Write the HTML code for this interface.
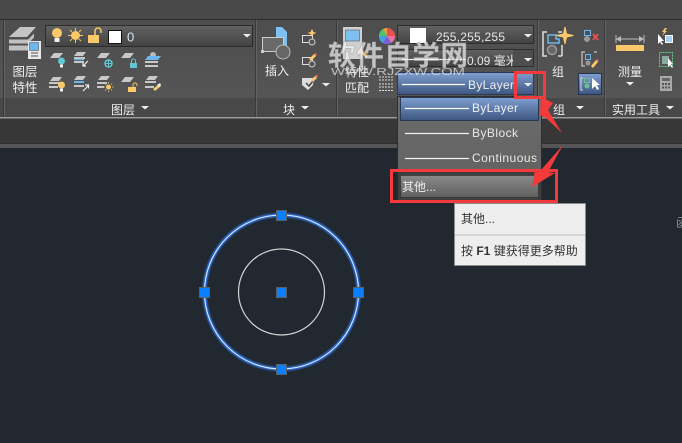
<!DOCTYPE html>
<html><head><meta charset="utf-8">
<style>
html,body{margin:0;padding:0;background:#212830;width:682px;height:443px;overflow:hidden}
svg{display:block}
text{font-family:"Liberation Sans","Noto Sans CJK SC",sans-serif}
</style></head>
<body>
<svg width="682" height="443" viewBox="0 0 682 443" xmlns="http://www.w3.org/2000/svg">
<defs>
<linearGradient id="bl" x1="0" y1="0" x2="0" y2="1"><stop offset="0" stop-color="#7f9fd0"/><stop offset="1" stop-color="#3d5680"/></linearGradient>
<linearGradient id="dd" x1="0" y1="0" x2="0" y2="1"><stop offset="0" stop-color="#626262"/><stop offset="1" stop-color="#434343"/></linearGradient>
<linearGradient id="btn" x1="0" y1="0" x2="0" y2="1"><stop offset="0" stop-color="#8a8a8a"/><stop offset="1" stop-color="#5f5f5f"/></linearGradient>
<linearGradient id="rib" x1="0" y1="0" x2="0" y2="1"><stop offset="0" stop-color="#4d4d4d"/><stop offset="1" stop-color="#555"/></linearGradient>
<linearGradient id="menu" x1="0" y1="0" x2="0" y2="1"><stop offset="0" stop-color="#6c6c6c"/><stop offset="1" stop-color="#606060"/></linearGradient>
<filter id="gl" x="-10%" y="-10%" width="120%" height="120%"><feGaussianBlur stdDeviation="0.7"/></filter>
<g id="tri"><path d="M-4 0h8l-4 3.500z" fill="#eee"/></g>
</defs>

<!-- chrome -->
<rect width="682" height="19" fill="#494949"/>
<rect y="19" width="682" height="79" fill="url(#rib)"/>
<rect y="19" width="682" height="1" fill="#2e2e2e"/>
<rect y="98" width="682" height="19" fill="#484848"/>
<rect y="117" width="682" height="1.500" fill="#9a9a9a"/>
<rect y="118.500" width="682" height="25" fill="#373737"/>
<rect y="144" width="682" height="4" fill="#555"/>
<rect y="148" width="682" height="295" fill="#212830"/>
<g fill="#3a3a3a"><rect x="3" y="20" width="1" height="97"/><rect x="255" y="20" width="1" height="97"/><rect x="336" y="20" width="1" height="97"/><rect x="537" y="20" width="1" height="97"/><rect x="604" y="20" width="1" height="97"/></g>
<g fill="#626262"><rect x="4" y="20" width="1" height="97"/><rect x="256" y="20" width="1" height="97"/><rect x="337" y="20" width="1" height="97"/><rect x="538" y="20" width="1" height="97"/><rect x="605" y="20" width="1" height="97"/></g>

<!-- layer big icon -->
<path d="M9 37L20 27h16L27 37z" fill="#c4c4c4"/><path d="M9 39.500h19l6-6v4l-6 6H9z" fill="#c0c0c0"/><path d="M9 45.500h19v5H9z" fill="#c0c0c0"/>
<rect x="28" y="41" width="13" height="18" fill="#e8e8e8"/><rect x="29.500" y="42.500" width="9" height="8" fill="#6cb8ee" stroke="#444" stroke-width=".5"/>
<path d="M31 53h7M31 56h7" stroke="#555" stroke-width="1"/>
<text x="25" y="76" font-size="12.500" fill="#eee" text-anchor="middle">图层</text>
<text x="25" y="92" font-size="12.500" fill="#eee" text-anchor="middle">特性</text>

<!-- layer dropdown -->
<rect x="45.500" y="25.500" width="207" height="21" fill="url(#dd)" stroke="#2c2c2c"/>
<circle cx="57" cy="33" r="5" fill="#fbc96a"/><rect x="54.500" y="38" width="5" height="4" fill="#eee"/>
<circle cx="75.500" cy="35.500" r="4.500" fill="#fbc96a"/><path d="M75.500 28v3M75.500 40v3M68 35.500h3M80 35.500h3M70 30l2 2M79 39l2 2M81 30l-2 2M72 39l-2 2" stroke="#fbc96a" stroke-width="1"/>
<rect x="88" y="35" width="11" height="8" fill="#fbc96a"/><path d="M95 35v-4a3 3 0 0 1 6 0v2" fill="none" stroke="#fbc96a" stroke-width="1.500"/>
<rect x="108.500" y="30.500" width="13" height="13" fill="#fff" stroke="#111" stroke-width="1"/>
<text x="127" y="41.500" font-size="13" fill="#dbe8f2">0</text>
<use href="#tri" x="247" y="34"/>

<!-- layer small icons -->
<g>
<path d="M54 53h9l-4 5h-9z" fill="#c8c8c8"/><circle cx="61.500" cy="61" r="3.500" fill="#5fc8d4"/><rect x="60" y="64.500" width="3" height="3" fill="#eee"/>
<path d="M77 52h9l-3 4h-9zM74 57h11v2H74zM74 61h10v2H74z" fill="#c8c8c8"/><path d="M74 59.500h10" stroke="#6cb8ee" stroke-width="1.500"/><path d="M88 61l-5 5M83 63v3h3" stroke="#eee" stroke-width="1.200" fill="none"/>
<path d="M101 53h9l-4 5h-9z" fill="#c8c8c8"/><circle cx="108.500" cy="63.500" r="3.500" fill="none" stroke="#5fc8d4" stroke-width="1.500"/><path d="M105 63.500h7M108.500 60v7" stroke="#5fc8d4"/>
<path d="M125 53h9l-4 5h-9z" fill="#c8c8c8"/><rect x="130" y="63" width="7" height="5" fill="#5fc8d4"/><path d="M131.500 63v-2a2 2 0 0 1 4 0v2" fill="none" stroke="#5fc8d4"/>
<circle cx="153" cy="55" r="3" fill="#b8b8b8"/><path d="M148 56h13l-3 4h-13z" fill="#6cb8ee"/><path d="M145 61h13v2h-13zM145 65h13v2h-13z" fill="#c8c8c8"/>
<path d="M53 77h9l-3 4h-9zM49 82h11v2H49zM49 86h9v2H49z" fill="#c8c8c8"/><circle cx="61.500" cy="85" r="3.500" fill="#fbc96a"/><rect x="60" y="88.500" width="3" height="3" fill="#eee"/>
<path d="M77 76h9l-3 4h-9zM74 85h10v2H74z" fill="#c8c8c8"/><path d="M74 82h10" stroke="#6cb8ee" stroke-width="2"/><path d="M83 91l5-5M85 85h3.500v3.500" stroke="#eee" stroke-width="1.200" fill="none"/>
<path d="M101 76h9l-3 4h-9zM97 82h10v2H97zM97 86h7v2h-7z" fill="#c8c8c8"/><circle cx="108.500" cy="87" r="2.500" fill="#fbc96a"/><path d="M108.500 82v1.500M108.500 90.500v1.500M103.500 87h1.500M112 87h1.500M105 83.500l1 1M111 89.500l1 1M112 83.500l-1 1M105 90.500l1-1" stroke="#fbc96a" stroke-width=".8"/>
<path d="M125 77h9l-4 5h-9z" fill="#c8c8c8"/><rect x="128" y="87" width="8" height="5" fill="#fbc96a"/><path d="M133 87v-2a2 2 0 0 1 4 0v1" fill="none" stroke="#fbc96a"/>
<path d="M149 76h9l-3 4h-9zM145 81h11v2h-11zM145 86h9v2h-9z" fill="#c8c8c8"/><path d="M153 89l6-5 2 2-6 5z" fill="#fbc96a"/><path d="M157 85l3-2 1 2-2 2z" fill="#eee"/>
</g>
<text x="123" y="114" font-size="12" fill="#eee" text-anchor="middle">图层</text>
<use href="#tri" x="145" y="106"/>

<!-- block panel -->
<path d="M276 27h6l5 5v22h-11z" fill="#7ec0f0"/>
<rect x="262.500" y="37.500" width="21" height="14" fill="#6a6a6a" stroke="#ccc"/>
<circle cx="283" cy="52" r="7" fill="#666" stroke="#bbb"/>
<rect x="261" y="50" width="3" height="3" fill="#ccc"/>
<text x="277" y="75" font-size="12" fill="#eee" text-anchor="middle">插入</text>
<rect x="302.500" y="35.500" width="10" height="7" fill="none" stroke="#ddd"/><circle cx="312" cy="42" r="3" fill="#555" stroke="#ccc"/><path d="M312 29l1.500 3 3 1-3 1-1.500 3-1.500-3-3-1 3-1z" fill="#fbc96a"/>
<rect x="302.500" y="57.500" width="10" height="7" fill="none" stroke="#ddd"/><circle cx="312" cy="64" r="3" fill="#555" stroke="#ccc"/><path d="M309 59l5-5 2 2-5 5z" fill="#fbc96a"/><path d="M314 54l2-1 1 2-1 1z" fill="#e66"/>
<path d="M302 78h12l-1 7-5 5-6-5z" fill="#ddd"/><path d="M306 83l3 3 4-5" stroke="#444" stroke-width="1.500" fill="none"/><path d="M311 80l4-4 2 2-4 4z" fill="#fbc96a"/><path d="M315 76l1.500-1.500 1.500 1.500-1.500 1.500z" fill="#e66"/>
<use href="#tri" x="326" y="83"/>
<text x="289" y="114" font-size="12" fill="#eee" text-anchor="middle">块</text>
<use href="#tri" x="305" y="106"/>

<!-- properties -->
<rect x="343" y="27" width="19" height="32" fill="#d0d0d0"/><rect x="345.500" y="30" width="14" height="11" fill="#7ec0f0" stroke="#444" stroke-width=".5"/>
<path d="M362 50l6 6-2 2-6-6z" fill="#fbc96a"/>
<circle cx="387" cy="36" r="8" fill="#e8a040"/><path d="M387 36V28a8 8 0 0 1 8 8z" fill="#e85050"/><path d="M387 36h8a8 8 0 0 1-4 7z" fill="#f070a0"/><path d="M387 36l4 7a8 8 0 0 1-8 0z" fill="#7060e0"/><path d="M387 36l-4 7a8 8 0 0 1-4-7z" fill="#40a0e0"/><path d="M387 36h-8a8 8 0 0 1 4-7z" fill="#50c070"/>
<text x="357" y="76" font-size="12" fill="#eee" text-anchor="middle">特性</text>
<text x="357" y="92" font-size="12" fill="#eee" text-anchor="middle">匹配</text>
<path d="M379 77h15M379 80h15M379 84h15M379 87h15M379 90.500h15" stroke="#ddd" stroke-width="1" stroke-dasharray="2 1"/>

<!-- right dropdowns -->
<rect x="397.500" y="25.500" width="136" height="18" fill="url(#dd)" stroke="#2e2e2e"/>
<rect x="410" y="28" width="16" height="15" fill="#fff"/>
<text x="436" y="41" font-size="12" fill="#e6e6e6" textLength="69">255,255,255</text>
<use href="#tri" x="528" y="34"/>
<rect x="397.500" y="49.500" width="136" height="17" fill="url(#dd)" stroke="#2e2e2e"/>
<path d="M402 59.500h64" stroke="#eee" stroke-width="1.200"/>
<text x="467" y="65" font-size="12" fill="#e6e6e6">0.09 毫米</text>
<rect x="513" y="50" width="20" height="16" fill="#4e4e4e"/>
<use href="#tri" x="528" y="58"/>
<rect x="397.500" y="72.500" width="136" height="22" fill="url(#bl)" stroke="#2a3a55"/>
<path d="M402 84.500h63" stroke="#fff" stroke-width="1.200"/>
<text x="468" y="89" font-size="12" fill="#eee" textLength="46">ByLayer</text>
<use href="#tri" x="528" y="83"/>

<!-- group panel -->
<path d="M547 32h-4v24h4M558 32h4M562 56h-4" fill="none" stroke="#ddd" stroke-width="1.500"/>
<path d="M562 45v11" fill="none" stroke="#ddd" stroke-width="1.500"/>
<path d="M548 35h8v4h3v4h-11z" fill="none" stroke="#6cb8ee" stroke-width="1.500"/>
<circle cx="552" cy="50" r="4.500" fill="#666" stroke="#999" stroke-width="1.500"/>
<path d="M565 27l1.500 7 7 1.500-7 1.500-1.500 7-1.500-7-7-1.500 7-1.500z" fill="#fbc96a" stroke="#fbc96a"/>
<text x="558" y="76" font-size="12" fill="#eee" text-anchor="middle">组</text>
<rect x="584.500" y="30.500" width="6" height="5" fill="none" stroke="#6cb8ee"/><circle cx="587" cy="39" r="3" fill="#999"/><path d="M593 34l5 6M598 34l-5 6" stroke="#e85050" stroke-width="1.800"/>
<path d="M585 52h-3v14h3M594 52h3v0" fill="none" stroke="#ddd"/><rect x="585.500" y="54.500" width="5" height="5" fill="none" stroke="#6cb8ee"/><circle cx="588" cy="63" r="2.500" fill="#999"/><path d="M591 66l5-6 2 2-5 6z" fill="#fbc96a"/><path d="M596 60l1-1 2 2-1 1z" fill="#e66"/>
<rect x="578.500" y="73.500" width="23" height="21" fill="url(#bl)" stroke="#223355"/>
<path d="M583 78h-2v12h2" fill="none" stroke="#ddd"/><rect x="584.500" y="78.500" width="5" height="4" fill="none" stroke="#6cc090"/><circle cx="587" cy="86" r="2.500" fill="#6cc090"/>
<path d="M592 78v11l3-3 2 4 2-1-2-4h3z" fill="#fff"/>
<text x="559" y="114" font-size="12" fill="#eee" text-anchor="middle">组</text>
<use href="#tri" x="580" y="106"/>

<!-- utilities -->
<rect x="616" y="45" width="28" height="6" fill="#fbc96a"/><path d="M616 35v8M644 35v8M618 39h24" stroke="#bbb" stroke-width="1"/><path d="M616 39l5-3v6zM644 39l-5-3v6z" fill="#bbb"/>
<text x="630" y="76" font-size="12" fill="#eee" text-anchor="middle">测量</text>
<use href="#tri" x="630" y="82"/>
<path d="M658 34v10l2-2 2 3 1-1-2-3h3z" fill="#fff"/><path d="M665 28l-3 4h2l-2 4 5-5h-2l2-3z" fill="#fbc96a"/><rect x="665" y="35" width="8" height="8" fill="#fff"/><path d="M666 37h6M666 39h6M666 41h6" stroke="#4aa0e0" stroke-width="1"/>
<rect x="659.500" y="52.500" width="13" height="14" fill="none" stroke="#5fd08a" stroke-dasharray="2 1"/><path d="M662 56h7v8h-7z" fill="#88aaa0"/>
<path d="M668 58v9l2-2 2 3 1-1-2-3h2z" fill="#fff"/>
<rect x="660" y="76" width="12" height="15" fill="#aaa"/><rect x="662" y="78" width="8" height="3" fill="#666"/><path d="M662 83h2v2h-2zM665 83h2v2h-2zM668 83h2v2h-2zM662 86.500h2v2h-2zM665 86.500h2v2h-2zM668 86.500h2v2h-2z" fill="#555"/>
<text x="636" y="114" font-size="12" fill="#eee" text-anchor="middle">实用工具</text>
<use href="#tri" x="670" y="106"/>

<!-- watermark -->
<text x="328" y="65" font-size="27.500" font-weight="bold" fill="#f0f0f0" fill-opacity=".72" stroke="#999" stroke-width=".4" textLength="140">软件自学网</text>
<text x="331" y="75" font-size="10.500" fill="#e4e4e4" fill-opacity=".75" textLength="134" lengthAdjust="spacingAndGlyphs">WWW.RJZXW.COM</text>

<!-- menu -->
<rect x="397.500" y="96.500" width="144" height="103" fill="url(#menu)" stroke="#2e2e2e"/>
<rect x="398" y="172" width="143" height="28" fill="#3e3e3e"/>
<rect x="400.500" y="97.500" width="138" height="23" fill="url(#bl)" stroke="#2a3a55"/>
<path d="M405 108.500h64" stroke="#fff" stroke-width="1.200"/>
<text x="472" y="112" font-size="12" fill="#f0f0f0" textLength="46">ByLayer</text>
<path d="M405 133.500h64" stroke="#f0f0f0" stroke-width="1.200"/>
<text x="472" y="137" font-size="12" fill="#e8e8e8" textLength="46">ByBlock</text>
<path d="M405 158.500h64" stroke="#f0f0f0" stroke-width="1.200"/>
<text x="472" y="162" font-size="12" fill="#e8e8e8" textLength="65">Continuous</text>
<rect x="400.500" y="175.500" width="138" height="22" fill="url(#btn)" stroke="#222" stroke-dasharray="1 1"/>
<text x="402" y="191" font-size="12" fill="#f0f0f0">其他...</text>

<!-- red annotations -->
<path d="M541 97L553 103 548 110 562 133 546 118 540 115z" fill="#f43a3a"/>
<path d="M563 145L548 172 555 173 532 187 535 170 541 170z" fill="#f43a3a"/>
<rect x="515.500" y="72.500" width="29" height="25" fill="none" stroke="#f43a3a" stroke-width="3"/>
<rect x="391.500" y="170.500" width="165" height="31" fill="none" stroke="#f43a3a" stroke-width="3"/>

<!-- tooltip -->
<rect x="454.500" y="203.500" width="131" height="62" fill="#eeeeee" stroke="#8c8c8c"/>
<path d="M455 235h130" stroke="#bdbdbd"/>
<text x="461" y="223" font-size="12" fill="#333">其他...</text>
<text x="461" y="255" font-size="12" fill="#333">按 <tspan font-weight="bold">F1</tspan> 键获得更多帮助</text>

<!-- right edge text -->
<text x="676" y="227" font-size="12" fill="#8a8f94">函</text>

<!-- circles -->
<circle cx="281.500" cy="292" r="77" fill="none" stroke="#2f6fd8" stroke-width="4" filter="url(#gl)"/>
<circle cx="281.500" cy="292" r="77" fill="none" stroke="#e8f0ff" stroke-width="1"/>
<circle cx="281.500" cy="292" r="43" fill="none" stroke="#d4d4d4" stroke-width="1.200"/>
<g fill="#0a80ff" stroke="#5a6068" stroke-width="1">
<rect x="276.500" y="210.500" width="10" height="10"/>
<rect x="276.500" y="364.500" width="10" height="10"/>
<rect x="199.500" y="287.500" width="10" height="10"/>
<rect x="353.500" y="287.500" width="10" height="10"/>
<rect x="276.500" y="287.500" width="10" height="10"/>
</g>
</svg>
</body></html>
